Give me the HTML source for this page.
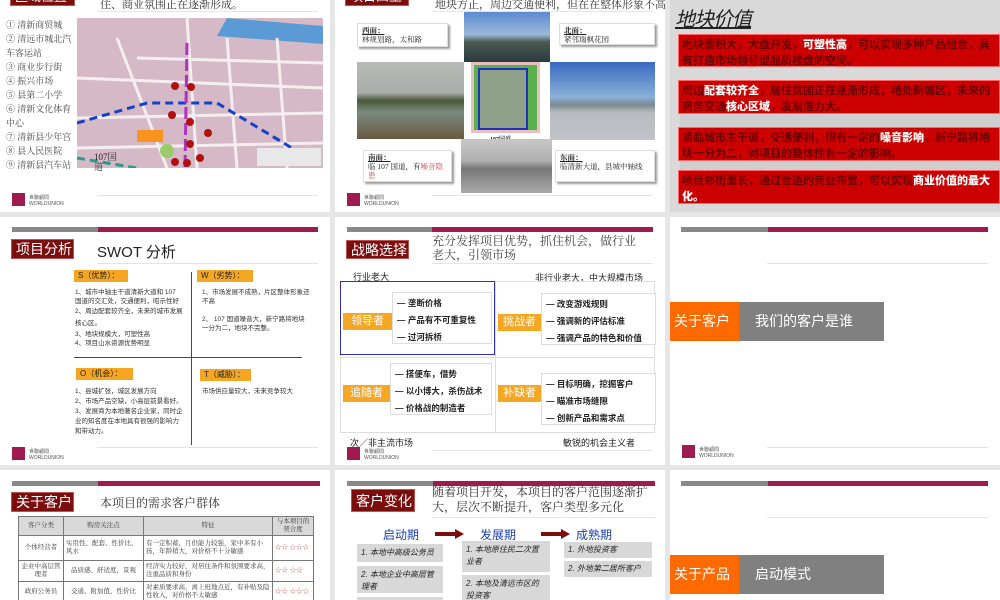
<!DOCTYPE html>
<html><head><meta charset="utf-8"><style>
*{margin:0;padding:0;box-sizing:border-box}
body{width:1000px;height:600px;overflow:hidden;background:#e6e6e6;position:relative;font-family:"Liberation Sans","Noto Sans CJK SC",sans-serif;color:#222}
.a{position:absolute}
.s{position:absolute;background:#fff;overflow:hidden}
.serif{font-family:"Liberation Serif","Noto Serif CJK SC",serif}
.t{position:absolute;background:#7b0d0d;color:#fff;font-size:14px;line-height:19px;padding-left:4px;border:1px solid #b55}
.ln{position:absolute;height:1px;background:#e4e4e4}
.bar{position:absolute;height:5px;background:#9e1a4f}
.bar i{position:absolute;left:0;top:0;height:5px;background:#888}
.logo{position:absolute;width:13px;height:13px;background:#9e1a4f}
.logot{position:absolute;font-size:5px;color:#555;line-height:6px}
.or{position:absolute;background:#f5a623;font-size:8px;line-height:12px;padding-left:4px;color:#222}
.sw{position:absolute;font-size:6.5px;line-height:9px;color:#333}
.rb{position:absolute;background:#cc0000;border:1px solid #ff6666;color:#6a0000;font-weight:bold;font-size:11px;line-height:16px;padding:2px 3px}
.rb b{color:#fff}
.box{position:absolute;background:#fff;border:1px solid #ddd;font-size:8.5px;line-height:17px;padding:2px 4px;font-weight:bold;color:#222;white-space:nowrap}
.ol{position:absolute;background:#f5a623;color:#fff;font-size:11px;text-align:center;line-height:17px}
.gb{position:absolute;background:#d8d8d8;font-size:8px;font-style:italic;line-height:12px;padding:3px 4px;color:#222}
table{border-collapse:collapse;font-size:6.5px;color:#333}
td{border:1px solid #777;padding:1px 2px;line-height:8px;text-align:center}
</style></head><body>

<!-- ROW 1 -->
<div class="s" style="left:0;top:0;width:330px;height:212px">
  <div class="t" style="left:10px;top:-14px;width:65px;height:20px;font-size:13px">区域位置</div>
  <div class="a serif" style="left:100px;top:-4px;font-size:11px;color:#333">住、商业氛围正在逐渐形成。</div>
  <div class="ln" style="left:97px;top:11px;width:221px"></div>
  <div class="a serif" style="left:6px;top:18px;width:70px;font-size:9px;line-height:14px;color:#444">
  ① 清新商贸城<br>② 清远市城北汽车客运站<br>③ 商业步行街<br>④ 振兴市场<br>⑤ 县第二小学<br>⑥ 清新文化体育中心<br>⑦ 清新县少年宫<br>⑧ 县人民医院<br>⑨ 清新县汽车站</div>
  <svg class="a" style="left:77px;top:18px" width="246" height="150" viewBox="0 0 246 150">
    <rect width="246" height="150" fill="#d6b9c6"/>
    <path d="M150 0 L246 8 L246 26 L140 18Z" fill="#5a9bd6"/>
    <g stroke="#f4eef0" stroke-width="3" fill="none">
      <path d="M0 100 L246 95"/><path d="M0 60 L246 70"/><path d="M40 20 L90 150"/><path d="M110 0 L120 150"/><path d="M150 20 L160 150"/><path d="M200 20 L210 150"/><path d="M0 130 L246 125"/><path d="M60 40 L246 45"/>
    </g>
    <path d="M0 105 L70 85 L140 85 L240 145" stroke="#1540c8" stroke-width="3" stroke-dasharray="8 5" fill="none"/>
    <path d="M110 25 L108 150" stroke="#b030c0" stroke-width="3" stroke-dasharray="12 4" fill="none"/>
    <path d="M0 140 L60 150" stroke="#2a9a8a" stroke-width="3" stroke-dasharray="8 5" fill="none"/>
    <rect x="60" y="112" width="26" height="12" fill="#f7941d"/>
    <circle cx="90" cy="133" r="7" fill="#9c6"/>
    <g fill="#b01010"><circle cx="98" cy="144" r="4"/><circle cx="110" cy="145" r="4"/><circle cx="123" cy="140" r="4"/><circle cx="113" cy="126" r="4"/><circle cx="131" cy="115" r="4"/><circle cx="113" cy="104" r="4"/><circle cx="95" cy="97" r="4"/><circle cx="98" cy="68" r="4"/><circle cx="114" cy="69" r="4"/></g>
    <rect x="180" y="130" width="64" height="18" fill="#e8e8e8"/>
  </svg>
  <div class="a serif" style="left:94px;top:152px;font-size:9px;line-height:10px">107国<br>道</div>
  <div class="logo" style="left:12px;top:193px"></div><div class="logot" style="left:29px;top:195px">世聯顧問<br>WORLDUNION</div>
  <div class="ln" style="left:97px;top:195px;width:221px"></div>
</div>

<div class="s" style="left:335px;top:0;width:330px;height:212px">
  <div class="t" style="left:10px;top:-14px;width:64px;height:20px;font-size:13px">项目四至</div>
  <div class="a serif" style="left:100px;top:-4px;font-size:11px;color:#333;white-space:nowrap">地块方正，周边交通便利，但在在整体形象不高。</div>
  <div class="ln" style="left:97px;top:11px;width:221px"></div>
  <div class="a" style="left:129px;top:12px;width:86px;height:50px;background:linear-gradient(#5c8bd0 0,#9bb8d8 45%,#4a5a50 60%,#2a3a40 100%)"></div>
  <div class="a" style="left:22px;top:62px;width:107px;height:77px;background:linear-gradient(#b8bab8 0,#a9aca8 40%,#4a5a3a 50%,#7a8a80 65%,#6a5a40 100%)"></div>
  <div class="a" style="left:136px;top:62px;width:69px;height:71px;background:#5ab04a;border:3px solid #e8c0c0"></div>
  <div class="a" style="left:143px;top:68px;width:50px;height:62px;background:#8fa088;border:2px solid #2030c0"></div>
  <div class="a" style="left:215px;top:62px;width:105px;height:78px;background:linear-gradient(#3a6ac0 0,#8ab0d8 45%,#7a8a90 55%,#b8bcc0 65%,#c0c4c8 100%)"></div>
  <div class="a serif" style="left:155px;top:134px;font-size:6px;font-weight:bold">107国道</div>
  <div class="a" style="left:126px;top:139px;width:91px;height:54px;background:linear-gradient(#c8c8c8 0,#b0b0b0 40%,#777 55%,#aaa 100%)"></div>
  <div class="box serif" style="left:22px;top:23px;width:91px;height:24px;font-weight:normal;font-size:7.5px;line-height:9px;box-shadow:2px 2px 2px #999"><u><b>西面：</b></u><br>林规划路，太和路</div>
  <div class="box serif" style="left:224px;top:23px;width:96px;height:22px;font-weight:normal;font-size:7.5px;line-height:9px;box-shadow:2px 2px 2px #999"><u><b>北面：</b></u><br>紧邻瑞枫花园</div>
  <div class="box serif" style="left:28px;top:150px;width:89px;height:32px;font-weight:normal;font-size:7.5px;line-height:9px;box-shadow:2px 2px 2px #999;white-space:normal"><u><b>南面：</b></u><br>临 107 国道，有<span style="color:#c44">噪音隐患</span></div>
  <div class="box serif" style="left:220px;top:150px;width:100px;height:32px;font-weight:normal;font-size:7.5px;line-height:9px;box-shadow:2px 2px 2px #999;white-space:normal"><u><b>东面：</b></u><br>临清新大道，县城中轴线</div>
  <div class="logo" style="left:12px;top:193px"></div><div class="logot" style="left:29px;top:195px">世聯顧問<br>WORLDUNION</div>
  <div class="ln" style="left:97px;top:195px;width:221px"></div>
</div>

<div class="s" style="left:670px;top:0;width:330px;height:212px;background:#d9d9d9">
  <div class="a" style="left:10px;top:110px;width:320px;height:60px;background:#cfcfcf"></div>
  <div class="a" style="left:5px;top:3px;font-size:20px;font-style:italic;text-decoration:underline;color:#222;letter-spacing:-1px">地块价值</div>
  <div class="rb" style="left:8px;top:34px;width:322px;height:33px">地块面积大，大盘开发，<b>可塑性高</b>，可以实现多种产品组合，具有打造市场领导型品质楼盘的空间。</div>
  <div class="rb" style="left:8px;top:80px;width:322px;height:34px">周边<b>配套较齐全</b>，居住氛围正在逐渐形成，地处新城区，未来的商务交通<b>核心区域</b>，发展潜力大。</div>
  <div class="rb" style="left:8px;top:127px;width:322px;height:34px">紧临城市主干道，交通便利，但有一定的<b>噪音影响</b>，新宁路将地块一分为二，对项目的整体性有一定的影响。</div>
  <div class="rb" style="left:8px;top:170px;width:322px;height:34px">项目邻街面长，通过合适的商业布置，可以实现<b>商业价值的最大化。</b></div>
</div>

<!-- ROW 2 -->
<div class="s" style="left:0;top:217px;width:330px;height:248px">
  <div class="bar" style="left:12px;top:10px;width:306px"><i style="width:86px"></i></div>
  <div class="t" style="left:11px;top:22px;width:63px;height:20px">项目分析</div>
  <div class="a" style="left:97px;top:24px;font-size:15px">SWOT 分析</div>
  <div class="ln" style="left:97px;top:46px;width:221px"></div>
  <div class="or" style="left:74px;top:53px;width:54px">S（优势）：</div>
  <div class="or" style="left:197px;top:53px;width:56px">W（劣势）：</div>
  <div class="a" style="left:191px;top:55px;width:1px;height:173px;background:#9e1a4f"></div>
  <div class="a" style="left:74px;top:140px;width:228px;height:1px;background:#9e1a4f"></div>
  <div class="sw" style="left:75px;top:71px;width:108px">1、城市中轴主干道清新大道和 107 国道的交汇处，交通便利，昭示性好<br><span style="line-height:12px">2、周边配套较齐全，未来的城市发展核心区。</span><br>3、地块规模大，可塑性高<br>4、项目山水资源优势明显</div>
  <div class="sw" style="left:202px;top:71px;width:108px">1、市场发展不成熟，片区整体形象还不高<br><br>2、 107 国道噪音大，新宁路将地块一分为二，地块不完整。</div>
  <div class="or" style="left:76px;top:151px;width:57px">O（机会）：</div>
  <div class="or" style="left:200px;top:152px;width:51px">T（威胁）：</div>
  <div class="sw" style="left:75px;top:170px;width:108px;line-height:10px">1、县城扩张，城区发展方向<br>2、市场产品空缺，小高层前景看好。<br>3、发展商为本地著名企业家，同时企业的知名度在本地具有很强的影响力和带动力。</div>
  <div class="sw" style="left:202px;top:170px;width:108px">市场供应量较大，未来竞争较大</div>
  <div class="logo" style="left:12px;top:230px"></div><div class="logot" style="left:29px;top:232px">世聯顧問<br>WORLDUNION</div>
  <div class="ln" style="left:97px;top:230px;width:221px"></div>
</div>

<div class="s" style="left:335px;top:217px;width:330px;height:248px">
  <div class="bar" style="left:12px;top:10px;width:306px"><i style="width:85px"></i></div>
  <div class="t" style="left:11px;top:23px;width:63px;height:19px">战略选择</div>
  <div class="a serif" style="left:97px;top:17px;width:210px;font-size:12px;line-height:14px;color:#444">充分发挥项目优势，抓住机会，做行业老大，引领市场</div>
  <div class="ln" style="left:97px;top:46px;width:221px"></div>
  <div class="a" style="left:18px;top:53px;font-size:9px">行业老大</div>
  <div class="a" style="left:200px;top:54px;font-size:9px">非行业老大，中大规模市场</div>
  <div class="a" style="left:5px;top:64px;width:315px;height:152px;border:1px solid #ddd"></div>
  <div class="a" style="left:160px;top:64px;width:1px;height:152px;background:#ddd"></div>
  <div class="a" style="left:5px;top:140px;width:315px;height:1px;background:#ddd"></div>
  <div class="a" style="left:5px;top:64px;width:155px;height:74px;border:1px solid #3030b0"></div>
  <div class="box" style="left:57px;top:75px;width:100px;height:52px">— 垄断价格<br>— 产品有不可重复性<br>— 过河拆桥</div>
  <div class="ol" style="left:8px;top:96px;width:49px">领导者</div>
  <div class="box" style="left:206px;top:76px;width:115px;height:52px">— 改变游戏规则<br>— 强调新的评估标准<br>— 强调产品的特色和价值</div>
  <div class="ol" style="left:163px;top:97px;width:43px">挑战者</div>
  <div class="box" style="left:55px;top:146px;width:102px;height:52px">— 搭便车，借势<br>— 以小博大，杀伤战术<br>— 价格战的制造者</div>
  <div class="ol" style="left:8px;top:168px;width:47px">追随者</div>
  <div class="box" style="left:206px;top:156px;width:115px;height:52px">— 目标明确，挖掘客户<br>— 瞄准市场缝隙<br>— 创新产品和需求点</div>
  <div class="ol" style="left:163px;top:168px;width:43px">补缺者</div>
  <div class="a" style="left:15px;top:219px;font-size:9px">次／非主流市场</div>
  <div class="a" style="left:228px;top:219px;font-size:9px">敏锐的机会主义者</div>
  <div class="logo" style="left:12px;top:230px"></div><div class="logot" style="left:29px;top:232px">世聯顧問<br>WORLDUNION</div>
  <div class="ln" style="left:97px;top:233px;width:221px"></div>
</div>

<div class="s" style="left:670px;top:217px;width:330px;height:248px">
  <div class="bar" style="left:11px;top:10px;width:307px"><i style="width:87px"></i></div>
  <div class="ln" style="left:97px;top:46px;width:221px"></div>
  <div class="a" style="left:0;top:85px;width:69px;height:39px;background:#ff6a00;color:#fff;font-size:14px;line-height:39px;padding-left:4px">关于客户</div>
  <div class="a" style="left:69px;top:85px;width:145px;height:39px;background:#808080;color:#fff;font-size:14px;line-height:39px;padding-left:16px">我们的客户是谁</div>
  <div class="logo" style="left:12px;top:228px"></div><div class="logot" style="left:29px;top:230px">世聯顧問<br>WORLDUNION</div>
  <div class="ln" style="left:97px;top:230px;width:221px"></div>
</div>

<!-- ROW 3 -->
<div class="s" style="left:0;top:470px;width:330px;height:130px">
  <div class="bar" style="left:12px;top:11px;width:308px"><i style="width:86px"></i></div>
  <div class="t" style="left:11px;top:22px;width:63px;height:20px">关于客户</div>
  <div class="a serif" style="left:100px;top:24px;font-size:12px;color:#333">本项目的需求客户群体</div>
  <table class="a serif" style="left:18px;top:46px;width:296px">
    <tr style="background:#d9d9d9;height:19px"><td style="width:45px">客户分类</td><td style="width:80px">购房关注点</td><td style="width:129px">特征</td><td>与本项目的契合度</td></tr>
    <tr style="height:25px"><td>个体经营者</td><td style="text-align:left">实用性、配套、性价比、风水</td><td style="text-align:left">有一定积蓄，月供能力较强，家中多有小孩，年龄稍大，对价格不十分敏感</td><td style="color:#c66;text-align:left">☆☆ ☆☆☆</td></tr>
    <tr style="height:21px"><td>企业中高层管理者</td><td>品质感、舒适度，景观</td><td style="text-align:left">经济实力较好，对居住条件和氛围要求高，注重品质和身份</td><td style="color:#c66;text-align:left">☆☆ ☆☆</td></tr>
    <tr style="height:21px"><td>政府公务员</td><td>交通、附加值、性价比</td><td style="text-align:left">对素质要求高，离上班地点近，有补贴及隐性收入，对价格不太敏感</td><td style="color:#c66;text-align:left">☆☆ ☆☆☆</td></tr>
  </table>
</div>

<div class="s" style="left:335px;top:470px;width:330px;height:130px">
  <div class="bar" style="left:12px;top:11px;width:308px"><i style="width:86px"></i></div>
  <div class="t" style="left:16px;top:19px;width:64px;height:23px;line-height:22px">客户变化</div>
  <div class="a serif" style="left:97px;top:15px;width:225px;font-size:12px;line-height:15px;color:#333">随着项目开发，本项目的客户范围逐渐扩大，层次不断提升，客户类型多元化</div>
  <div class="ln" style="left:97px;top:47px;width:223px"></div>
  <div class="a" style="left:48px;top:56px;font-size:12px;color:#1a3fb0">启动期</div>
  <div class="a" style="left:145px;top:56px;font-size:12px;color:#1a3fb0">发展期</div>
  <div class="a" style="left:241px;top:56px;font-size:12px;color:#1a3fb0">成熟期</div>
  <svg class="a" style="left:100px;top:59px" width="30" height="10"><path d="M0 3h20V0l9 5-9 5V7H0z" fill="#7b0d0d"/></svg>
  <svg class="a" style="left:206px;top:59px" width="30" height="10"><path d="M0 3h20V0l9 5-9 5V7H0z" fill="#7b0d0d"/></svg>
  <div class="gb" style="left:22px;top:74px;width:86px;height:18px;line-height:12px">1. 本地中高级公务员</div>
  <div class="gb" style="left:22px;top:96px;width:86px;height:27px">2. 本地企业中高层管理者</div>
  <div class="gb" style="left:22px;top:127px;width:86px;height:20px">3. 本地个体经营者</div>
  <div class="gb" style="left:127px;top:71px;width:88px;height:31px">1. 本地原住民二次置业者</div>
  <div class="gb" style="left:127px;top:105px;width:88px;height:28px">2. 本地及清远市区的投资客</div>
  <div class="gb" style="left:229px;top:72px;width:88px;height:16px;line-height:10px">1. 外地投资客</div>
  <div class="gb" style="left:229px;top:91px;width:88px;height:16px;line-height:10px">2. 外地第二居所客户</div>
</div>

<div class="s" style="left:670px;top:470px;width:330px;height:130px">
  <div class="bar" style="left:11px;top:11px;width:307px"><i style="width:87px"></i></div>
  <div class="ln" style="left:97px;top:47px;width:221px"></div>
  <div class="a" style="left:0;top:85px;width:69px;height:39px;background:#ff6a00;color:#fff;font-size:14px;line-height:39px;padding-left:4px">关于产品</div>
  <div class="a" style="left:69px;top:85px;width:145px;height:39px;background:#808080;color:#fff;font-size:14px;line-height:39px;padding-left:16px">启动模式</div>
</div>
</body></html>
